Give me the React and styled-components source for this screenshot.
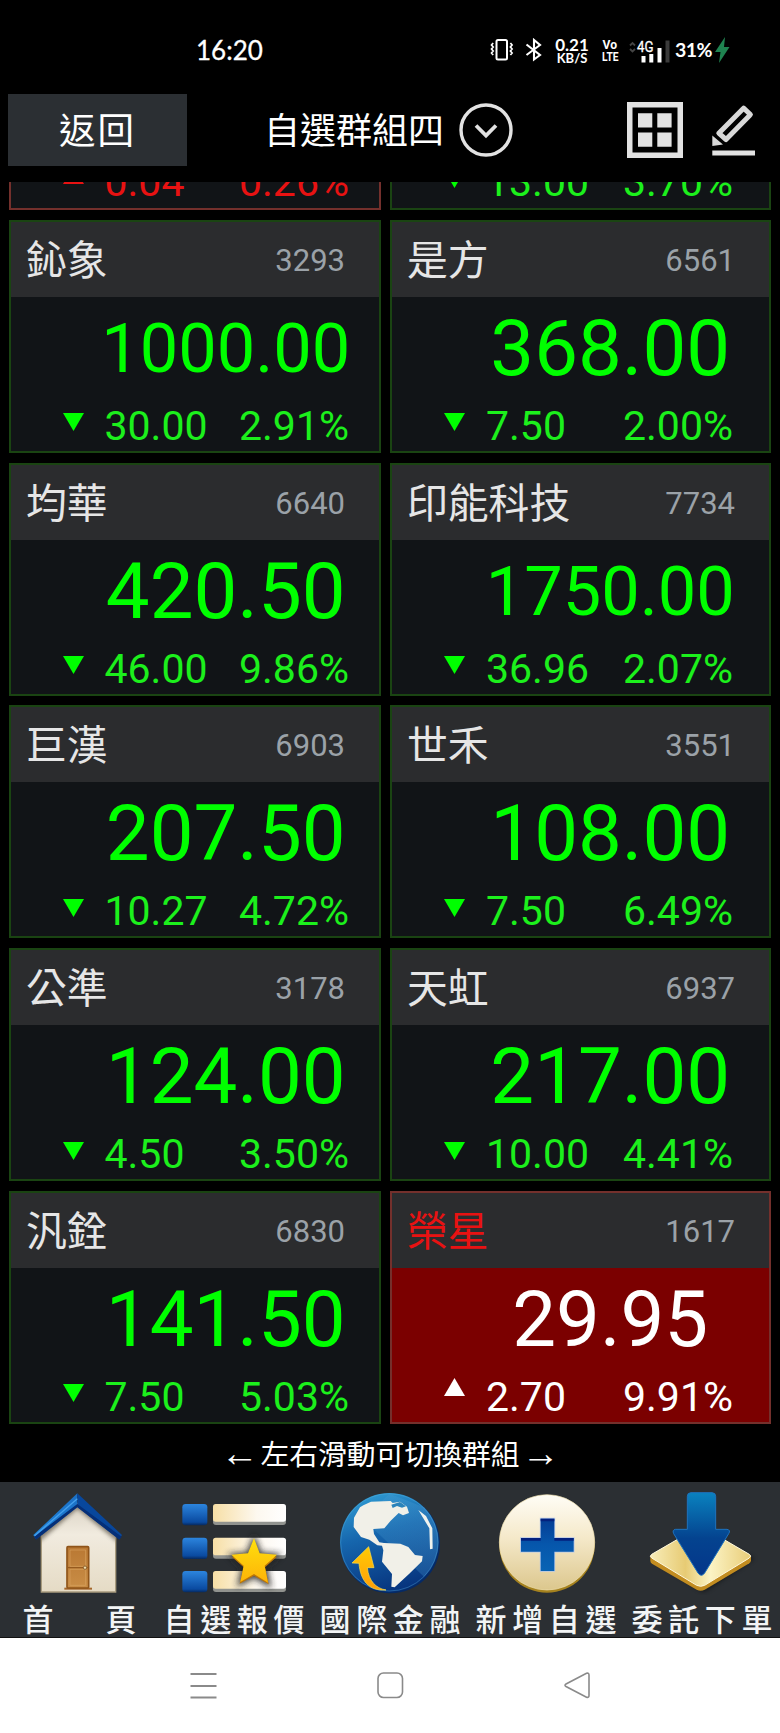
import React from 'react';
import styled, { createGlobalStyle } from 'styled-components';

const CJK = '"Noto Sans CJK TC", sans-serif';

const GlobalStyle = createGlobalStyle`
  * { box-sizing: border-box; }
  body { margin: 0; background: #000; }
`;

const Screen = styled.div`
  display: flex;
  flex-direction: column;
  width: 780px;
  height: 1733px;
  background: #000;
  color: #fff;
  font-family: Roboto, ${CJK};
  overflow: hidden;
`;

/* ---------- status bar ---------- */

const StatusBar = styled.div`
  display: flex;
  justify-content: space-between;
  align-items: center;
  height: 85px;
  padding: 15px 49px 0 196px;
`;

const Clock = styled.span`
  font: 400 26px/30px Lato, sans-serif;
  -webkit-text-stroke: 0.3px #fff;
`;

const StatusIcons = styled.div`
  display: flex;
  align-items: center;
  height: 30px;

  svg { display: block; flex: none; }
`;

const Stack = styled.div`
  display: flex;
  flex-direction: column;
  align-items: center;
  width: ${(p) => p.$width}px;
  margin-left: ${(p) => p.$gap}px;
`;

const StackLine = styled.span`
  font: 700 ${(p) => p.$size}px/${(p) => p.$line}px Lato, sans-serif;
  white-space: nowrap;
`;

const Volte = styled.svg`
  margin-left: 12px;
`;

const BluetoothIcon = styled.svg`
  margin-left: 11px;
`;

const Signal = styled.svg`
  margin-left: 9px;
`;

const Battery = styled.span`
  width: 40px;
  margin-left: 5px;
  font: 700 19.5px/30px Lato, sans-serif;
  letter-spacing: -0.6px;
`;

/* ---------- title bar ---------- */

const TitleBar = styled.header`
  display: flex;
  align-items: flex-start;
  flex: none;
  height: 97px;
  padding: 9px 24px 0 8px;
`;

const BackButton = styled.button`
  width: 179px;
  height: 72px;
  padding: 0 0 3px;
  border: 0;
  background: #2b2f33;
  color: #fff;
  font: 400 36.5px/68px ${CJK};
  letter-spacing: 2px;
`;

const GroupPicker = styled.div`
  display: flex;
  align-items: center;
  height: 72px;
  margin-left: 77px;

  svg { margin-left: 15px; }
`;

const GroupName = styled.span`
  padding-bottom: 3px;
  font: 400 36px/69px ${CJK};
`;

const Tools = styled.div`
  display: flex;
  align-items: center;
  gap: 28px;
  height: 72px;
  margin-left: auto;
`;

/* ---------- quote cards ---------- */

const Board = styled.main`
  display: grid;
  grid-template-columns: 372px 381px;
  grid-auto-rows: 233px;
  gap: 9.7px 9px;
  align-content: end;
  flex: none;
  height: 1241.7px;
  padding-left: 9px;
  overflow: hidden;
`;

const Card = styled.article`
  display: flex;
  flex-direction: column;
  border: 2px solid ${(p) => (p.$up ? '#74302c' : '#1a4412')};
  background: ${(p) => (p.$limit ? '#7b0000' : '#111417')};
  color: ${(p) => (p.$limit ? '#fff' : p.$up ? '#e81212' : '#00ff00')};
`;

const CardHead = styled.div`
  display: flex;
  justify-content: space-between;
  align-items: flex-start;
  height: 75px;
  padding: 0 34px 0 15px;
  background: #2b2c2e;
`;

const Name = styled.span`
  color: ${(p) => (p.$limit ? '#e81212' : '#e6e6e6')};
  font: 400 40.8px/71px ${CJK};
`;

const Code = styled.span`
  color: #9ba2a8;
  font: 400 31px/77px Roboto, sans-serif;
`;

const Price = styled.div`
  height: 102px;
  padding-left: ${(p) => (p.$side ? 59.5 : 61.5)}px;
  text-align: center;
  font: 400 ${(p) => (p.$long ? 68.5 : 78)}px/103px Roboto, sans-serif;
`;

const ChangeRow = styled.div`
  display: grid;
  grid-template-columns: 42px ${(p) => (p.$side ? 137 : 134.5)}px 1fr;
  padding: 2px 0 0 ${(p) => (p.$side ? 52 : 51.5)}px;
  color: ${(p) => (p.$limit ? '#fff' : p.$up ? '#e81212' : '#1cf01c')};
  font: 400 41px/51px Roboto, sans-serif;
`;

const Mark = styled.svg`
  display: block;
  margin-top: ${(p) => (p.$limit ? 6.3 : p.$up ? 8.5 : 12.5)}px;
`;

/* ---------- footer ---------- */

const Hint = styled.div`
  display: flex;
  justify-content: center;
  align-items: center;
  gap: 4px;
  flex: none;
  height: 58px;
  font: 400 28.8px/54px ${CJK};
`;

const Arrow = styled.span`
  font: 400 38px/54px "Liberation Sans", sans-serif;
  width: 34px;
  display: flex;
  justify-content: center;
`;

const NavBar = styled.nav`
  display: grid;
  grid-template-columns: repeat(5, 156px);
  flex: none;
  height: 156px;
  padding-top: 8px;
  background: #2b2f33;
  border-bottom: 1px solid #111;
`;

const NavItem = styled.a`
  display: flex;
  flex-direction: column;
  align-items: center;

  svg { display: block; }
`;

const NavLabel = styled.span`
  display: flex;
  gap: ${(p) => (p.$pair ? 52 : 5.6)}px;
  margin-top: 5px;
  padding-left: ${(p) => (p.$pair ? 3 : 0)}px;
  color: #f2f4f5;
  font: 500 31px/36px ${CJK};
  white-space: nowrap;
`;

const SystemBar = styled.div`
  display: flex;
  justify-content: center;
  align-items: center;
  gap: 160px;
  height: 95px;
  background: #fff;
`;

/* ---------- drawings ---------- */

const Vibrate = () => (
  <svg width="24" height="24" viewBox="0 0 24 24" fill="none" stroke="#fff" strokeWidth="2">
    <rect x="6.5" y="2" width="10.5" height="19.5" rx="1.5" />
    <path d="M3.2 5 1.5 7l1.7 2-1.7 2 1.7 2-1.7 2 1.7 2M20.4 5l1.7 2-1.7 2 1.7 2-1.7 2 1.7 2-1.7 2" strokeWidth="1.7" />
  </svg>
);

const Bluetooth = () => (
  <BluetoothIcon width="18" height="24" viewBox="0 0 18 24" fill="none" stroke="#fff" strokeWidth="2.1">
    <path d="M1.5 6.5 15 17 9 21.5V2l6 5L1.5 17" />
  </BluetoothIcon>
);

const VolteMark = () => (
  <Volte width="18" height="26" viewBox="0 0 18 26" fill="#fff" fontFamily="Roboto" fontWeight="700">
    <text x="1.5" y="11.5" fontSize="12.5" textLength="14.5" lengthAdjust="spacingAndGlyphs">Vo</text>
    <text x="1" y="24" fontSize="13.5" textLength="16.5" lengthAdjust="spacingAndGlyphs">LTE</text>
  </Volte>
);

const SignalBars = () => (
  <Signal width="42" height="28" viewBox="0 0 42 28">
    <path d="M2 9.5 4.5 7 7 9.5M2 13l2.5 2.5L7 13" fill="none" stroke="#444" strokeWidth="1.8" />
    <text x="9" y="15.5" fill="#fff" fontFamily="Roboto" fontWeight="400" stroke="#fff" strokeWidth=".3" fontSize="14.5" textLength="16.5" lengthAdjust="spacingAndGlyphs">4G</text>
    <path d="M13.5 20h4v6.5h-4zM21.3 18h4v8.5h-4zM29.5 12h4v14.5h-4z" fill="#fff" />
    <path d="M37.5 4.5h4v22h-4z" fill="#3b3b3b" />
  </Signal>
);

const Bolt = () => (
  <svg width="16" height="28" viewBox="0 0 16 28">
    <path d="M10 1 0 16h5.5L4 27 14.5 11H9z" fill="#1f8350" />
  </svg>
);

const ChevronCircle = () => (
  <svg width="54" height="54" viewBox="0 0 54 54" fill="none" stroke="#e2e2e2" strokeWidth="3.4">
    <circle cx="27" cy="27" r="25" />
    <path d="M17 22.5 27 32.5 37 22.5" strokeWidth="3.8" />
  </svg>
);

const GridIcon = () => (
  <svg width="56" height="56" viewBox="0 0 56 56">
    <rect x="2.75" y="2.75" width="50.5" height="50.5" fill="none" stroke="#e2e2e2" strokeWidth="5.5" />
    <path d="M11 11.3h14.3v14.2H11zM30.3 11.3h14.3v14.2H30.3zM11 30.6h14.3v14.2H11zM30.3 30.6h14.3v14.2H30.3z" fill="#e2e2e2" />
  </svg>
);

const PencilIcon = () => (
  <svg width="45" height="52" viewBox="0 0 45 52">
    <path d="M7.8 29.2 31.8 5l.8-.8 6.8 6.3-.8 1L15 35.5z" fill="none" stroke="#d8d8d8" strokeWidth="5" strokeLinejoin="round" />
    <path d="M1.3 42V31.5l10.7 9z" fill="#d8d8d8" />
    <path d="M1.3 46.5h42.7v5H1.3z" fill="#e2e2e2" />
  </svg>
);

const HomeArt = () => (
  <svg width="156" height="105" viewBox="0 210 468 315">
    <defs>
      <linearGradient id="wall" x1="0" y1="0" x2="0" y2="1"><stop offset="0" stopColor="#d9d2c4" /><stop offset=".35" stopColor="#f1ebdf" /><stop offset="1" stopColor="#e5dbc5" /></linearGradient>
      <linearGradient id="roofL" x1="1" y1="0" x2="0" y2="1"><stop offset="0" stopColor="#1b6fc4" /><stop offset="1" stopColor="#1f86dd" /></linearGradient>
      <linearGradient id="door" x1="0" y1="0" x2="0" y2="1"><stop offset="0" stopColor="#b97833" /><stop offset="1" stopColor="#c98d46" /></linearGradient>
      <filter id="soft" x="-20%" y="-20%" width="140%" height="140%"><feGaussianBlur stdDeviation="7" /></filter>
      <clipPath id="wallClip"><path d="M124 345 232 250 347 345V516H124z" /></clipPath>
    </defs>
    <path d="M124 345 232 250 347 345V516H124z" fill="url(#wall)" stroke="#a89b7e" strokeWidth="4" />
    <g clipPath="url(#wallClip)"><path d="M110 356 232 250 360 356" fill="none" stroke="#5d564b" strokeWidth="24" opacity=".75" filter="url(#soft)" /></g>
    <path d="M232 220 100 345 108 358 232 260z" fill="url(#roofL)" />
    <path d="M232 220 366 345 358 358 232 260z" fill="#08479c" />
    <path d="M102 350 108 359 232 262 358 359 365 350 232 252z" fill="#052f78" />
    <path d="M104 347 232 236" stroke="#45a0ec" strokeWidth="4" />
    <path d="M193 509v-6h83v6z" fill="#a5672c" />
    <rect x="201" y="380" width="65" height="124" rx="3" fill="url(#door)" stroke="#8f5419" strokeWidth="5" />
    <path d="M210 390h47v49h-47zM210 448h47v48h-47z" fill="none" stroke="#d8a25d" strokeWidth="2" />
    <path d="M204 443h59" stroke="#8f5419" strokeWidth="3" />
    <circle cx="255" cy="443" r="5" fill="#f0dca8" stroke="#6c4317" strokeWidth="2" />
  </svg>
);

const ListArt = () => (
  <svg width="156" height="105" viewBox="468 210 468 315">
    <defs>
      <linearGradient id="chip" x1="0" y1="0" x2="0" y2="1"><stop offset="0" stopColor="#2c85de" /><stop offset=".85" stopColor="#0a4aa0" /><stop offset="1" stopColor="#06285c" /></linearGradient>
      <linearGradient id="strip"><stop offset="0" stopColor="#f7dfa6" /><stop offset=".6" stopColor="#fdf8ef" /><stop offset="1" stopColor="#fff" /></linearGradient>
      <linearGradient id="star" x1="0" y1="0" x2="0" y2="1"><stop offset="0" stopColor="#ffe00e" /><stop offset="1" stopColor="#fdb307" /></linearGradient>
      <filter id="glow" x="-30%" y="-30%" width="160%" height="160%"><feGaussianBlur stdDeviation="9" /></filter>
    </defs>
    {[252, 353, 453].map((y) => (
      <g key={y}>
        <rect x="547" y={y} width="75" height="64" rx="10" fill="url(#chip)" />
        <rect x="639" y={y + 4} width="219" height="59" rx="9" fill="#91938f" />
        <rect x="639" y={y} width="219" height="53" rx="8" fill="url(#strip)" />
      </g>
    ))}
    <path d="M762 357 779 402 832 406 795 438 806 494 762 467 719 491 731 440 695 406 744 402z" fill="#222" stroke="#222" strokeWidth="12" opacity=".85" filter="url(#glow)" />
    <path d="M762 360 779 406 831 410 795 442 806 493 762 467 719 491 731 442 695 410 744 406z" fill="#bd7606" />
    <path d="M762 355 779 400 831 404 794 437 804 488 762 462 721 486 731 437 694 404 744 400z" fill="url(#star)" />
  </svg>
);

const GlobeArt = () => (
  <svg width="156" height="105" viewBox="36 210 468 315">
    <defs>
      <linearGradient id="sea" x1=".3" y1="0" x2=".6" y2="1"><stop offset="0" stopColor="#2f9ad2" /><stop offset=".4" stopColor="#1666ad" /><stop offset="1" stopColor="#06327c" /></linearGradient>
      <linearGradient id="shine" x1="1" y1="0" x2="0" y2="1"><stop offset="0" stopColor="#4a9bd1" stopOpacity=".35" /><stop offset="1" stopColor="#4a9bd1" stopOpacity=".2" /></linearGradient>
      <linearGradient id="swoosh" x1="0" y1="0" x2="0" y2="1"><stop offset="0" stopColor="#ffcb05" /><stop offset="1" stopColor="#ff9d08" /></linearGradient>
    </defs>
    <circle cx="271" cy="371" r="149" fill="#052a66" />
    <circle cx="268" cy="367" r="148" fill="url(#sea)" />
    <path d="M190 298 372 470A148 148 0 0 0 372 262L268 221z" fill="url(#shine)" />
    <circle cx="268" cy="367" r="146" fill="none" stroke="#59b4e0" strokeWidth="3" opacity=".35" />
    <path d="M190 256 213 245 272 243 278 249 300 245 321 260 327 279 309 286 296 279 272 302 253 325 220 327 222 342 238 367 252 369 301 371 325 381 345 405 368 408 366 424 327 462 284 502 274 500 276 462 246 425 250 391 246 377 232 376 208 359 183 351 161 321 162 293 180 262z" fill="#f1f0e8" />
    <path d="M274 254 300 246 318 259 306 263 291 258 278 264z" fill="#2b83ba" />
    <path d="M355 270 378 288 397 325 398 386 390 388 388 325z" fill="#eff2ee" />
    <path d="M206 380 222 443 202 443C206 483 228 505 258 510 206 514 181 481 177 430L156 429z" fill="url(#swoosh)" stroke="#ffe14a" strokeWidth="2" />
  </svg>
);

const AddArt = () => (
  <svg width="156" height="105" viewBox="-36 210 468 315">
    <defs>
      <linearGradient id="coin" x1="0" y1="0" x2="0" y2="1"><stop offset="0" stopColor="#fffdf6" /><stop offset=".45" stopColor="#f5e9ca" /><stop offset="1" stopColor="#dcc78d" /></linearGradient>
      <linearGradient id="cross" x1="0" y1="0" x2="0" y2="1"><stop offset="0" stopColor="#053d94" /><stop offset=".5" stopColor="#0657ac" /><stop offset="1" stopColor="#0863b4" /></linearGradient>
    </defs>
    <circle cx="201" cy="375" r="143" fill="#a5821f" />
    <circle cx="201" cy="367" r="143" fill="url(#coin)" stroke="#efe0af" strokeWidth="2" />
    <path d="M182 296h41v58h58v41h-58v58h-41v-58h-59v-41h59z" fill="url(#cross)" stroke="#b7c8e8" strokeWidth="5" paintOrder="stroke" />
    <path d="M182 296h41v8h-41zM123 354h59v8h-59zM223 354h58v8h-58z" fill="#04217e" />
  </svg>
);

const OrderArt = () => (
  <svg width="156" height="105" viewBox="432 210 468 315">
    <defs>
      <linearGradient id="tile"><stop offset="0" stopColor="#f8edb9" /><stop offset=".35" stopColor="#e7cb74" /><stop offset=".6" stopColor="#fbf3c4" /><stop offset="1" stopColor="#e9cd78" /></linearGradient>
      <linearGradient id="drop" x1="0" y1="0" x2="0" y2="1"><stop offset="0" stopColor="#0a82bf" /><stop offset=".55" stopColor="#04438f" /><stop offset="1" stopColor="#04368a" /></linearGradient>
      <filter id="shade" x="-20%" y="-20%" width="140%" height="150%"><feGaussianBlur stdDeviation="8" /></filter>
    </defs>
    <path d="M520 415 662 350 822 415 670 515z" fill="#0b0d0f" opacity=".6" filter="url(#shade)" />
    <path d="M511 408v14q0 6 5 9l134 78q12 6 24 0l134-79q5-3 5-9v-13z" fill="#c28c20" />
    <path d="M515 403 650 325q12-5 24 0l134 78q8 5 0 11l-134 82q-12 6-24 0L515 414q-8-5 0-11z" fill="url(#tile)" stroke="#fff9dc" strokeWidth="3" />
    <path d="M622 229q0-11 11-11h63q11 0 11 11v99h34q12 2 5 13L674 459q-10 14-20 0L581 341q-5-11 5-13h36z" fill="url(#drop)" stroke="#1f72bd" strokeWidth="3" />
  </svg>
);

/* ---------- data ---------- */

const quotes = [
  { name: '', code: '', price: '', change: '0.04', pct: '0.26%', up: true },
  { name: '', code: '', price: '', change: '13.00', pct: '3.70%' },
  { name: '鈊象', code: '3293', price: '1000.00', change: '30.00', pct: '2.91%' },
  { name: '是方', code: '6561', price: '368.00', change: '7.50', pct: '2.00%' },
  { name: '均華', code: '6640', price: '420.50', change: '46.00', pct: '9.86%' },
  { name: '印能科技', code: '7734', price: '1750.00', change: '36.96', pct: '2.07%' },
  { name: '巨漢', code: '6903', price: '207.50', change: '10.27', pct: '4.72%' },
  { name: '世禾', code: '3551', price: '108.00', change: '7.50', pct: '6.49%' },
  { name: '公準', code: '3178', price: '124.00', change: '4.50', pct: '3.50%' },
  { name: '天虹', code: '6937', price: '217.00', change: '10.00', pct: '4.41%' },
  { name: '汎銓', code: '6830', price: '141.50', change: '7.50', pct: '5.03%' },
  { name: '榮星', code: '1617', price: '29.95', change: '2.70', pct: '9.91%', up: true, limit: true },
];

const tabs = [
  { label: '首頁', Art: HomeArt },
  { label: '自選報價', Art: ListArt },
  { label: '國際金融', Art: GlobeArt },
  { label: '新增自選', Art: AddArt },
  { label: '委託下單', Art: OrderArt },
];

const Quote = ({ name, code, price, change, pct, up, limit, side }) => (
  <Card $up={up} $limit={limit}>
    <CardHead>
      <Name $limit={limit}>{name}</Name>
      <Code>{code}</Code>
    </CardHead>
    <Price $long={price.length > 6} $side={side}>{price}</Price>
    <ChangeRow $up={up} $limit={limit} $side={side}>
      <Mark $up={up} $limit={limit} width="21" height="18" viewBox="0 0 21 18">
        <path d={up ? 'M0 18 10.5 0 21 18z' : 'M0 0h21L10.5 18z'} fill={limit ? '#fff' : up ? '#e81212' : '#0f0'} />
      </Mark>
      <span>{change}</span>
      <span>{pct}</span>
    </ChangeRow>
  </Card>
);

export default function App() {
  return (
    <Screen>
      <GlobalStyle />
      <StatusBar>
        <Clock>16:20</Clock>
        <StatusIcons>
          <Vibrate />
          <Bluetooth />
          <Stack $width={34} $gap={12}>
            <StackLine $size={17} $line={15}>0.21</StackLine>
            <StackLine $size={13} $line={12}>KB/S</StackLine>
          </Stack>
          <VolteMark />
          <SignalBars />
          <Battery>31%</Battery>
          <Bolt />
        </StatusIcons>
      </StatusBar>
      <TitleBar>
        <BackButton>返回</BackButton>
        <GroupPicker>
          <GroupName>自選群組四</GroupName>
          <ChevronCircle />
        </GroupPicker>
        <Tools>
          <GridIcon />
          <PencilIcon />
        </Tools>
      </TitleBar>
      <Board>
        {quotes.map((q, i) => (
          <Quote key={i} {...q} side={i % 2} />
        ))}
      </Board>
      <Hint>
        <Arrow>←</Arrow>
        左右滑動可切換群組
        <Arrow>→</Arrow>
      </Hint>
      <NavBar>
        {tabs.map(({ label, Art }) => (
          <NavItem key={label}>
            <Art />
            <NavLabel $pair={label.length === 2}>
              {[...label].map((ch) => (
                <span key={ch}>{ch}</span>
              ))}
            </NavLabel>
          </NavItem>
        ))}
      </NavBar>
      <SystemBar>
        <svg width="27" height="27" viewBox="0 0 27 27" stroke="#8a8a8a" strokeWidth="2">
          <path d="M.5 2h26M.5 14h26M.5 25.5h26" />
        </svg>
        <svg width="27" height="27" viewBox="0 0 27 27" fill="none" stroke="#8a8a8a" strokeWidth="1.6">
          <rect x="1" y="1" width="24.5" height="24.5" rx="5.5" />
        </svg>
        <svg width="27" height="27" viewBox="0 0 27 27" fill="none" stroke="#8a8a8a" strokeWidth="1.6">
          <path d="M2 12 22.5 1.3q2.5-.8 2.5 1.7v20.5q0 2.5-2.5 1.7L2 14.5q-2-1.3 0-2.5z" />
        </svg>
      </SystemBar>
    </Screen>
  );
}
